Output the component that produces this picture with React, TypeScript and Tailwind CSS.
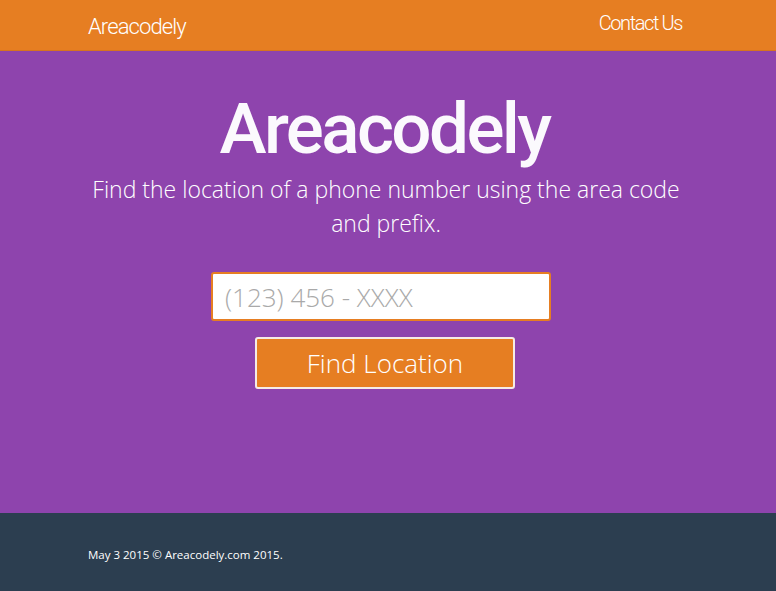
import React from "react";

const NARROW = { fontFamily: '"Roboto", "Open Sans", sans-serif' };
const OPEN = { fontFamily: '"Open Sans", "Noto Sans", sans-serif' };

export default function App() {
  return (
    <div className="flex min-h-[591px] flex-col" style={OPEN}>
      <header className="h-[51px] border-b border-[#d5741f] bg-[#e67e22]">
        <div className="mx-auto flex h-full w-[600px] items-center justify-between">
          <a className="mt-[2px] text-[22px] font-light tracking-[-0.9px] text-white" style={NARROW}>
            Areacodely
          </a>
          <a className="mr-[6px] -mt-[4px] text-[20px] font-light tracking-[-1.4px] text-white" style={NARROW}>
            Contact Us
          </a>
        </div>
      </header>

      <main className="flex h-[462px] flex-col items-center bg-[#8e44ad] text-white">
        <h1
          className="mr-[7px] mt-[33px] text-[71px] font-medium leading-[90px] tracking-[-2.6px] text-[#fbf9fd]"
          style={NARROW}
        >
          Areacodely
        </h1>
        <p className="mr-[4px] mt-[-2px] w-[600px] text-center text-[23px] font-light leading-[34px]">
          Find the location of a phone number using the area code and prefix.
        </p>
        <input
          type="text"
          placeholder="(123) 456 - XXXX"
          className="mr-[14px] mt-[32px] h-[49px] w-[340px] rounded-[3px] border-2 border-[#e67e22] bg-white px-[12px] text-[26px] font-light text-gray-700 placeholder:text-[#a9a9a9] focus:outline-none"
        />
        <button
          type="button"
          className="mr-[6px] mt-[16px] h-[52px] w-[260px] rounded-[3px] border-2 border-[#f5ece6] bg-[#e67e22] text-[26px] font-light text-white"
        >
          Find Location
        </button>
      </main>

      <footer className="flex-1 bg-[#2c3e50]">
        <div className="mx-auto w-[600px] pt-[33px] text-[11.5px] text-white">May 3 2015 © Areacodely.com 2015.</div>
      </footer>
    </div>
  );
}
